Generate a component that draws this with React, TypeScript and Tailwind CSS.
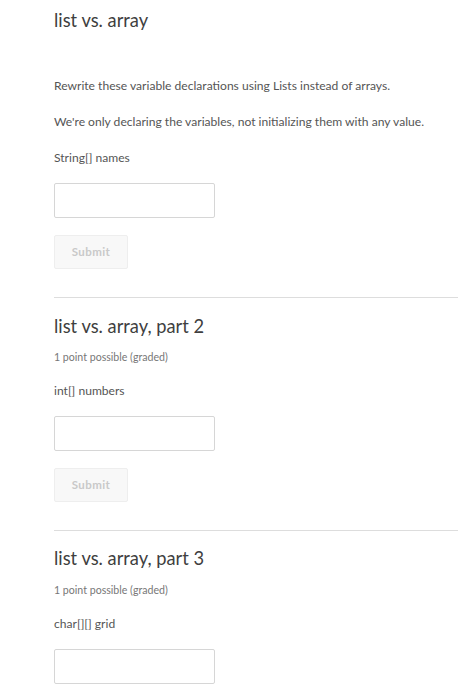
export default function App() {
  const font = { fontFamily: 'Lato, "Open Sans", sans-serif' };
  return (
    <div className="w-[458px] h-[700px] bg-white overflow-hidden pl-[54px]" style={font}>
      <h2 className="mt-[8px] text-[18.3px] leading-[24px] text-[#3f3f3f]">list vs. array</h2>
      <p className="mt-[44px] text-[12.1px] leading-[20px] text-[#555]">
        Rewrite these variable declarations using Lists instead of arrays.
      </p>
      <p className="mt-[16px] text-[12.1px] leading-[20px] text-[#555]">
        We're only declaring the variables, not initializing them with any value.
      </p>
      <p className="mt-[16px] text-[12.1px] leading-[20px] text-[#555]">String[] names</p>
      <input className="mt-[15px] block w-[161px] h-[35px] border border-[#d6d6d6] rounded-[2px] bg-white" />
      <button className="mt-[17px] block w-[74px] h-[34px] border border-[#eeeeee] bg-[#f8f8f8] rounded-[2px] text-[11.5px] font-bold text-[#c9c9c9] tracking-[0.4px]">
        Submit
      </button>
      <div className="mt-[28px] border-t border-[#dddddd]" />

      <h2 className="mt-[16px] text-[18.3px] leading-[24px] text-[#3f3f3f]">list vs. array, part 2</h2>
      <p className="mt-[11px] text-[10.6px] leading-[16px] text-[#777]">1 point possible (graded)</p>
      <p className="mt-[16px] text-[12.1px] leading-[20px] text-[#555]">int[] numbers</p>
      <input className="mt-[15px] block w-[161px] h-[35px] border border-[#d6d6d6] rounded-[2px] bg-white" />
      <button className="mt-[17px] block w-[74px] h-[34px] border border-[#eeeeee] bg-[#f8f8f8] rounded-[2px] text-[11.5px] font-bold text-[#c9c9c9] tracking-[0.4px]">
        Submit
      </button>
      <div className="mt-[28px] border-t border-[#dddddd]" />

      <h2 className="mt-[15px] text-[18.3px] leading-[24px] text-[#3f3f3f]">list vs. array, part 3</h2>
      <p className="mt-[12px] text-[10.6px] leading-[16px] text-[#777]">1 point possible (graded)</p>
      <p className="mt-[16px] text-[12.1px] leading-[20px] text-[#555]">char[][] grid</p>
      <input className="mt-[15px] block w-[161px] h-[35px] border border-[#d6d6d6] rounded-[2px] bg-white" />
    </div>
  );
}
